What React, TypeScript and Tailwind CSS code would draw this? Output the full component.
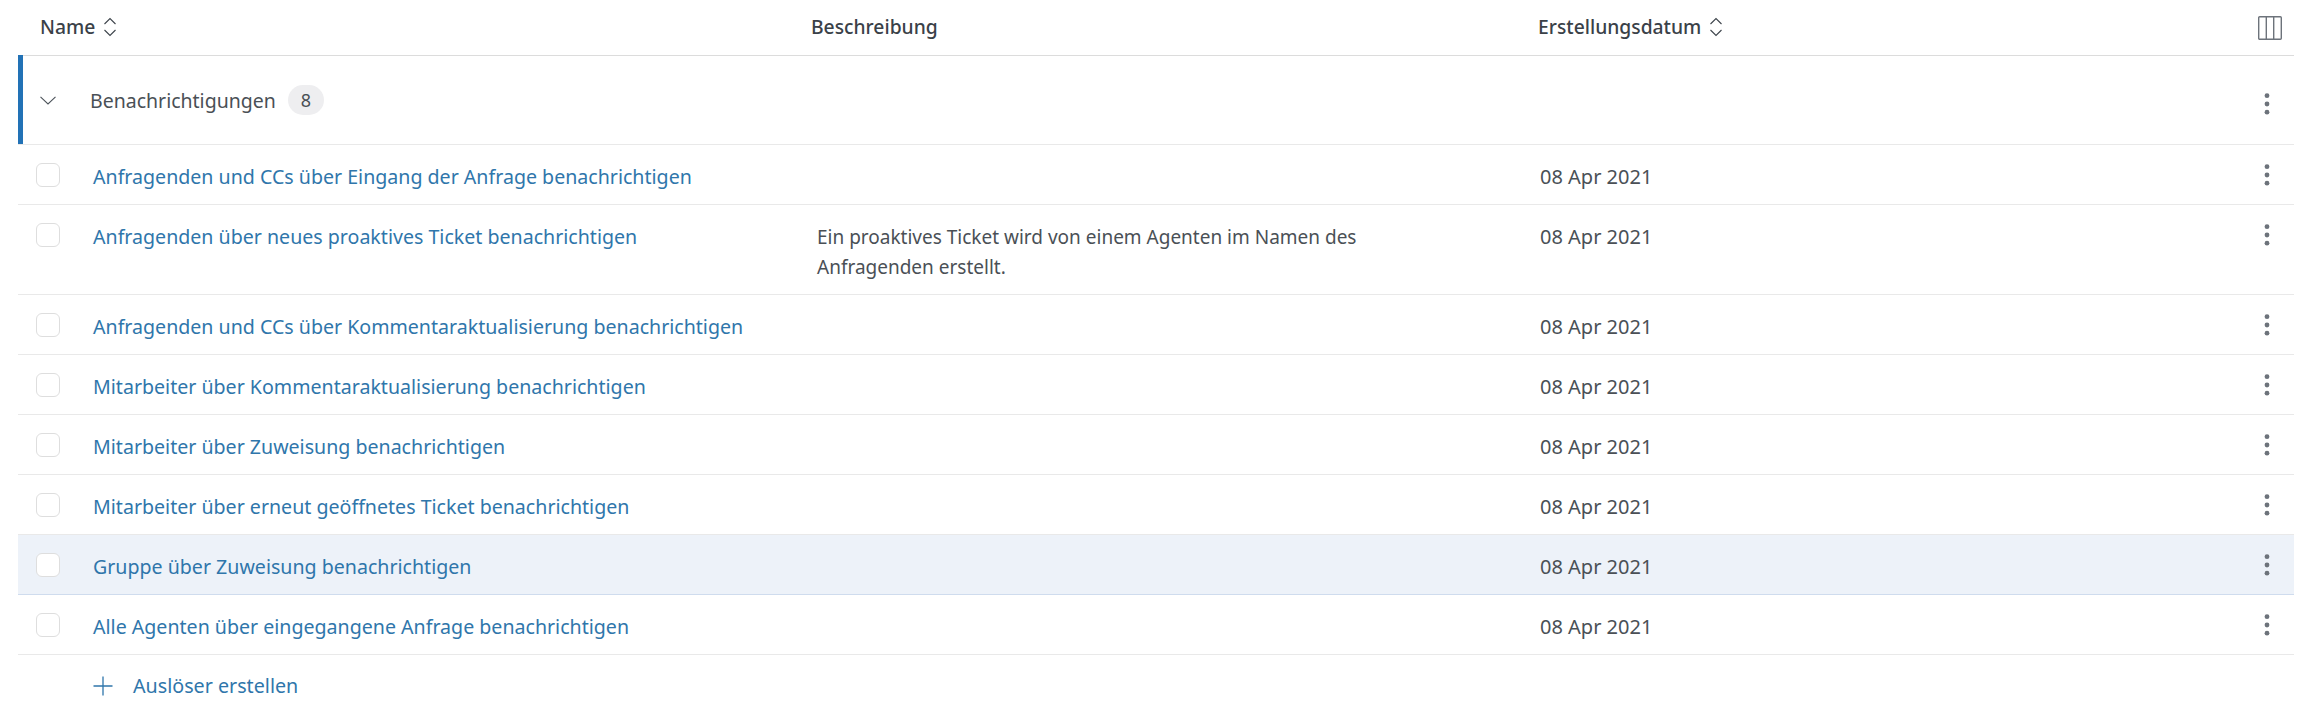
const FONT = "font-['Noto_Sans','Open_Sans',sans-serif]"

interface Trigger {
  name: string
  description?: string
  highlighted?: boolean
}

const TRIGGERS: Trigger[] = [
  { name: 'Anfragenden und CCs über Eingang der Anfrage benachrichtigen' },
  {
    name: 'Anfragenden über neues proaktives Ticket benachrichtigen',
    description: 'Ein proaktives Ticket wird von einem Agenten im Namen des Anfragenden erstellt.',
  },
  { name: 'Anfragenden und CCs über Kommentaraktualisierung benachrichtigen' },
  { name: 'Mitarbeiter über Kommentaraktualisierung benachrichtigen' },
  { name: 'Mitarbeiter über Zuweisung benachrichtigen' },
  { name: 'Mitarbeiter über erneut geöffnetes Ticket benachrichtigen' },
  { name: 'Gruppe über Zuweisung benachrichtigen', highlighted: true },
  { name: 'Alle Agenten über eingegangene Anfrage benachrichtigen' },
]

function SortIcon() {
  return (
    <svg width="14" height="20" viewBox="0 0 14 20" fill="none" stroke="#3d444b" strokeWidth="1.1" className="ml-[8px] -mt-[2px]">
      <path d="M1.5 7 L7 1.5 L12.5 7" />
      <path d="M1.5 13 L7 18.5 L12.5 13" />
    </svg>
  )
}

function Dots() {
  return (
    <svg width="6" height="24" viewBox="0 0 6 24" fill="#6d737b">
      <circle cx="3" cy="3.7" r="2.4" />
      <circle cx="3" cy="12" r="2.4" />
      <circle cx="3" cy="20.2" r="2.4" />
    </svg>
  )
}

function TriggerRow({ trigger }: { trigger: Trigger }) {
  return (
    <div
      className={`grid grid-cols-[75px_724px_723px_1fr_30px] border-b pt-[18px] ${
        trigger.description ? 'h-[90px]' : 'h-[60px]'
      } ${trigger.highlighted ? 'bg-[#edf2f9] border-[#cfdcee]' : 'bg-white border-[#e9e9e9]'}`}
    >
      <div className="pl-[18px]">
        <div className="w-[24px] h-[24px] rounded-[6px] border border-[#dedede] bg-white" />
      </div>
      <div className="text-[19.6px] leading-[28px] text-[#2f76ab]">{trigger.name}</div>
      <div className="text-[19px] leading-[30px] -mt-[1px] w-[600px] text-[#4a5056]">{trigger.description}</div>
      <div className="text-[20px] leading-[28px] text-[#4a5056]">08 Apr 2021</div>
      <div>
        <Dots />
      </div>
    </div>
  )
}

export default function App() {
  return (
    <div className={`${FONT} w-[2322px] h-[705px] overflow-hidden bg-white pl-[18px] pr-[28px]`}>
      <div className="grid grid-cols-[22px_771px_727px_1fr_36px] h-[56px] border-b border-[#dcdcdc] items-center text-[19.3px] font-medium text-[#3a4148]">
        <div />
        <div className="flex items-center">
          Name
          <SortIcon />
        </div>
        <div>Beschreibung</div>
        <div className="flex items-center">
          Erstellungsdatum
          <SortIcon />
        </div>
        <div>
          <svg width="24" height="24" viewBox="0 0 24 24" fill="none" stroke="#6d737b" strokeWidth="1.4">
            <rect x="0.7" y="0.7" width="22.6" height="22.6" rx="1" />
            <path d="M8.3 0.7 V23.3 M15.7 0.7 V23.3" />
          </svg>
        </div>
      </div>

      <div className="flex items-center h-[89px] border-b border-[#e9e9e9] relative">
        <div className="absolute left-0 -top-[1px] bottom-0 w-[5px] bg-[#2272b6]" />
        <div className="pl-[22px] w-[72px]">
          <svg width="16" height="9" viewBox="0 0 16 9" fill="none" stroke="#4d545b" strokeWidth="1.1">
            <path d="M0.5 0.8 L8 8 L15.5 0.8" />
          </svg>
        </div>
        <span className="text-[19.5px] leading-[28px] pt-[2px] text-[#4a5056]">Benachrichtigungen</span>
        <span className="ml-[12px] w-[36px] h-[30px] rounded-full bg-[#eeeef0] flex items-center justify-center text-[18px] text-[#4a5056]">
          8
        </span>
        <div className="ml-auto mr-[24px] mt-[8px]">
          <Dots />
        </div>
      </div>

      {TRIGGERS.map((trigger) => (
        <TriggerRow key={trigger.name} trigger={trigger} />
      ))}

      <div className="flex items-center pl-[75px] h-[62px] text-[19.7px] text-[#2f76ab]">
        <svg width="20" height="20" viewBox="0 0 20 20" fill="none" stroke="#2f76ab" strokeWidth="1.3">
          <path d="M10 0.5 V19.5 M0.5 10 H19.5" />
        </svg>
        <span className="ml-[20px]">Auslöser erstellen</span>
      </div>
    </div>
  )
}
